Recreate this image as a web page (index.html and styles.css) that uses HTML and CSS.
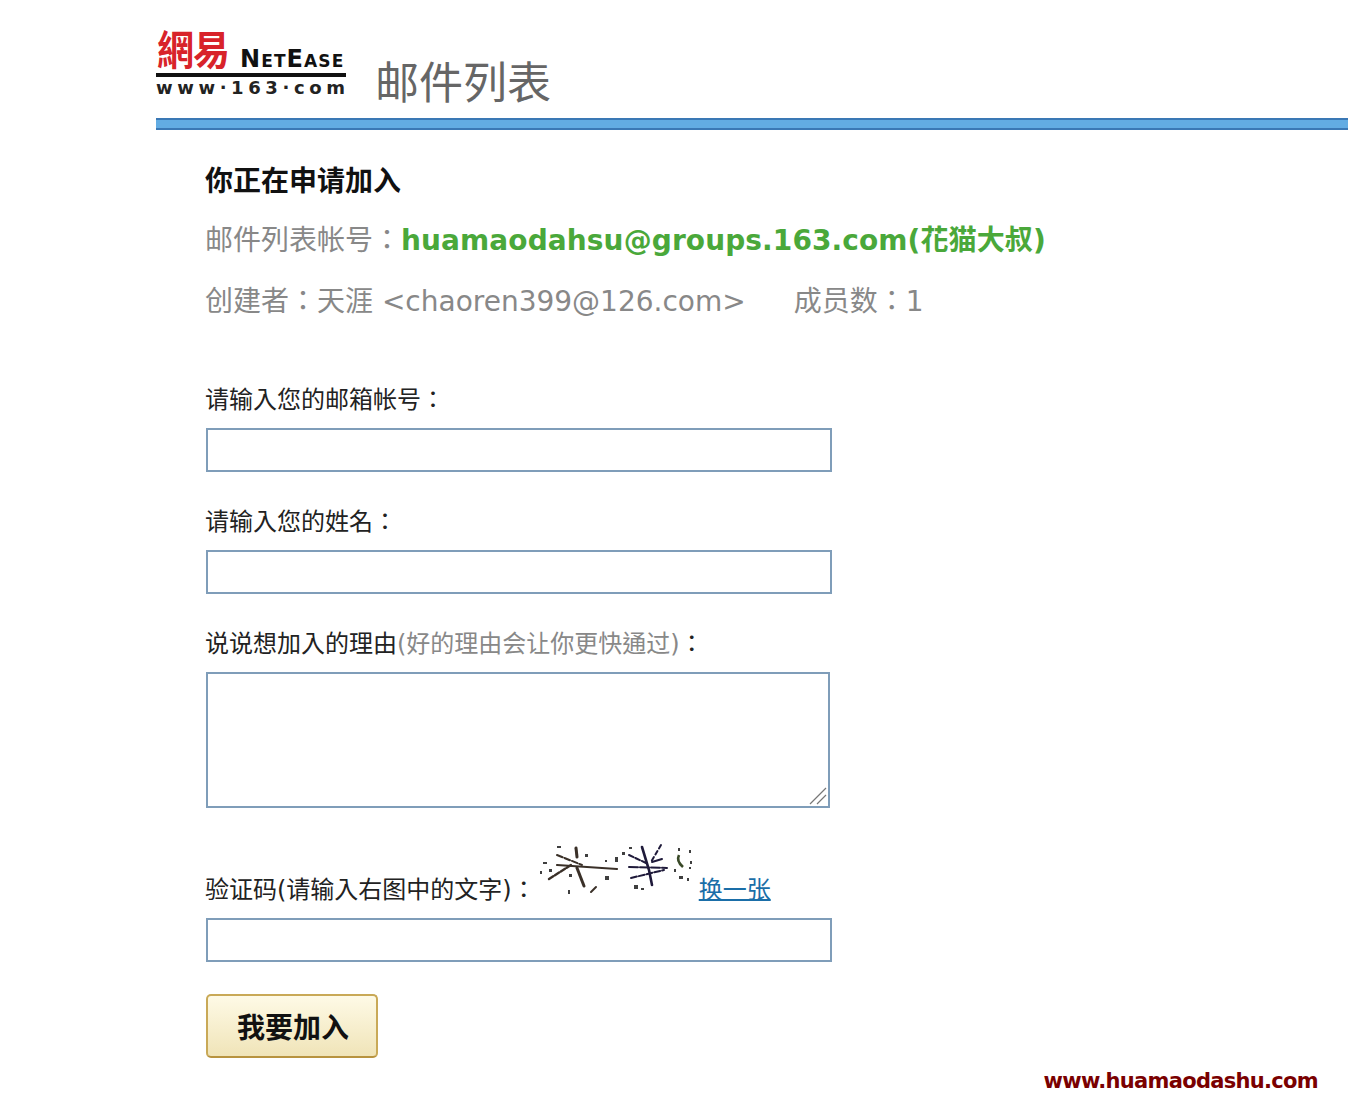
FILE: index.html
```html
<!DOCTYPE html>
<html>
<head>
    <meta name="viewport" content="width=device-width, initial-scale=1">
    <title>邮件列表</title>
    <link rel="stylesheet" href="styles.css">
</head>
<body>
    <div class="page">
        <div class="header">
            <div class="logo">
                <div class="logo-top">
                    <span class="logo-cn">網易</span>
                    <span class="logo-en">NetEase</span>
                </div>
                <div class="logo-url">www·163·com</div>
            </div>
            <div class="header-title">邮件列表</div>
        </div>
        <div class="header-bar"></div>

        <div class="content">
            <h1 class="intro-title">你正在申请加入</h1>
            <p class="info-line first">邮件列表帐号：<b class="group-name">huamaodahsu@groups.163.com(花猫大叔)</b></p>
            <p class="info-line">创建者：天涯 &lt;chaoren399@126.com&gt;<span class="member-count">成员数：1</span></p>

            <form class="join-form">
                <label class="field-label">请输入您的邮箱帐号：</label>
                <input class="text-input" type="text">

                <label class="field-label">请输入您的姓名：</label>
                <input class="text-input" type="text">

                <label class="field-label">说说想加入的理由<span class="hint">(好的理由会让你更快通过)</span>：</label>
                <div class="reason-wrap">
                    <textarea class="reason-input"></textarea>
                    <svg class="resize-grip" width="20" height="20" viewBox="0 0 20 20" aria-hidden="true">
                        <path d="M1 18 L17 2 M8 18 L17 9" fill="none" stroke="#777" stroke-width="1.2"/>
                    </svg>
                </div>

                <label class="field-label captcha-label">
                    <span>验证码(请输入右图中的文字)：</span>
                    <svg class="captcha" width="155" height="58" viewBox="0 0 155 58" aria-hidden="true">
                        <g fill="none" stroke="#3a3028" stroke-width="2" stroke-linecap="round">
                            <path d="M18 25 L78 29" stroke-width="2.2"/>
                            <path d="M18 15 L43 25" stroke-dasharray="6 2"/>
                            <path d="M10 39 L32 25" stroke-dasharray="5 2" stroke-width="2.4"/>
                            <path d="M37 8 L38 17" stroke-width="3"/>
                            <path d="M38 28 L45 46" stroke-width="3"/>
                            <path d="M52 52 L57 47"/>
                        </g>
                        <g fill="none" stroke="#1f1a3a" stroke-width="2" stroke-linecap="round">
                            <path d="M103 7 L110 30 L113 45" stroke-width="2.6"/>
                            <path d="M90 15 L107 23" stroke-dasharray="5 2"/>
                            <path d="M90 27 L128 28" stroke-dasharray="9 2"/>
                            <path d="M92 38 L125 30" stroke-dasharray="6 2"/>
                            <path d="M122 5 L112 22" stroke-dasharray="4 3"/>
                            <path d="M113 22 L123 19"/>
                        </g>
                        <path d="M140 15 Q137 21 144 27" fill="none" stroke="#3a4a28" stroke-width="2.6"/>
                        <g fill="#3f3f3f">
                            <rect x="18" y="6" width="4" height="2"/>
                            <rect x="4" y="22" width="4" height="2"/>
                            <rect x="1" y="31" width="2" height="3"/>
                            <rect x="10" y="29" width="3" height="3"/>
                            <rect x="46" y="14" width="3" height="3"/>
                            <rect x="66" y="20" width="2" height="2"/>
                            <rect x="76" y="17" width="3" height="5"/>
                            <rect x="66" y="36" width="4" height="4"/>
                            <rect x="29" y="50" width="2" height="4"/>
                            <rect x="30" y="34" width="3" height="3"/>
                            <rect x="83" y="12" width="3" height="3"/>
                            <rect x="90" y="7" width="3" height="2"/>
                            <rect x="95" y="45" width="4" height="4"/>
                            <rect x="102" y="48" width="3" height="2"/>
                            <rect x="139" y="8" width="2" height="3"/>
                            <rect x="150" y="10" width="2" height="3"/>
                            <rect x="151" y="21" width="2" height="3"/>
                            <rect x="135" y="29" width="2" height="3"/>
                            <rect x="150" y="27" width="2" height="2"/>
                            <rect x="140" y="36" width="4" height="3"/>
                            <rect x="148" y="38" width="2" height="3"/>
                        </g>
                    </svg>
                    <a class="captcha-link" href="#">换一张</a>
                </label>
                <input class="text-input" type="text">

                <button class="submit-btn" type="button">我要加入</button>
            </form>
        </div>

        <div class="watermark">www.huamaodashu.com</div>
    </div>
</body>
</html>
```

FILE: styles.css
```css
body {
    margin: 0;
    background: #fff;
    color: #333;
    font-family: "DejaVu Sans", "Noto Sans CJK TC", sans-serif;
}

.page {
    position: relative;
    height: 1118px;
    padding-left: 156px;
    box-sizing: border-box;
    overflow: hidden;
}

/* --- header --- */
.header {
    display: flex;
    align-items: flex-end;
    height: 118px;
}

.logo {
    width: 190px;
    margin-bottom: 19px;
}

.logo-top {
    display: flex;
    align-items: flex-end;
    height: 46px;
    border-bottom: 4px solid #111;
}

.logo-cn {
    width: 84px;
    padding-left: 1px;
    box-sizing: border-box;
    font-family: "Noto Sans CJK TC", sans-serif;
    font-size: 37px;
    font-weight: 700;
    line-height: 46px;
    letter-spacing: -1px;
    color: #d8232a;
    white-space: nowrap;
    transform: scaleY(1.12);
    transform-origin: bottom left;
}

.logo-en {
    font-family: "DejaVu Sans", sans-serif;
    font-size: 24px;
    font-weight: 700;
    font-variant: small-caps;
    line-height: 28px;
    letter-spacing: 1.1px;
    color: #111;
    white-space: nowrap;
}

.logo-url {
    font-family: "DejaVu Sans", sans-serif;
    font-size: 18px;
    font-weight: 700;
    line-height: 22px;
    letter-spacing: 4.6px;
    color: #222;
    white-space: nowrap;
}

.header-title {
    margin-left: 29px;
    margin-bottom: 2px;
    font-family: "Noto Sans CJK SC", sans-serif;
    font-size: 44px;
    line-height: 72px;
    color: #666;
}

.header-bar {
    height: 8px;
    background: #62ace3;
    border-top: 2px solid #3a78b5;
    border-bottom: 2px solid #3a78b5;
}

/* --- content --- */
.content {
    padding: 31px 0 0 49px;
}

.intro-title {
    margin: 0;
    font-family: "Noto Sans CJK SC", sans-serif;
    font-size: 28px;
    font-weight: 700;
    line-height: 36px;
    color: #111;
}

.info-line {
    margin: 25px 0 0 0;
    font-size: 28px;
    line-height: 36px;
    color: #888;
    white-space: nowrap;
}

.info-line.first {
    margin-top: 26px;
}

.group-name {
    letter-spacing: 0.1px;
    color: #4aa83a;
}

.member-count {
    margin-left: 48px;
}

/* --- form --- */
.join-form {
    display: flex;
    flex-direction: column;
    align-items: flex-start;
    margin-top: 66px;
}

.field-label {
    font-size: 24px;
    line-height: 28px;
    color: #222;
    margin-bottom: 14px;
    white-space: nowrap;
}

.hint {
    color: #888;
}

.text-input {
    display: block;
    width: 626px;
    height: 44px;
    box-sizing: border-box;
    border: 2px solid #7f9db9;
    background: #fff;
    margin: 0 0 36px 1px;
    padding: 0;
}

.reason-wrap {
    position: relative;
    width: 624px;
    height: 136px;
    margin: 0 0 36px 1px;
}

.reason-input {
    display: block;
    width: 100%;
    height: 100%;
    box-sizing: border-box;
    border: 2px solid #7f9db9;
    background: #fff;
    margin: 0;
    padding: 0;
    resize: none;
}

.resize-grip {
    position: absolute;
    right: 1px;
    bottom: 2px;
}

.captcha-label {
    display: flex;
    align-items: flex-end;
    height: 60px;
}

.captcha {
    display: block;
    margin: 0 5px 6px 3px;
}

.captcha-link {
    color: #1a6ea8;
    text-decoration: underline;
    text-decoration-thickness: 2px;
}

.submit-btn {
    display: block;
    width: 172px;
    height: 64px;
    margin: -4px 0 0 1px;
    box-sizing: border-box;
    border: 2px solid #c9a957;
    border-bottom-color: #b8933f;
    border-radius: 5px;
    background: linear-gradient(180deg, #fefae6 0%, #f0e4b8 100%);
    font-family: "Noto Sans CJK SC", sans-serif;
    font-size: 28px;
    font-weight: 700;
    color: #111;
    padding: 0 0 0 2px;
}

/* --- site mark in the corner --- */
.watermark {
    position: absolute;
    right: 30px;
    bottom: 23px;
    font-family: "DejaVu Sans", sans-serif;
    font-size: 21px;
    font-weight: 700;
    line-height: 28px;
    letter-spacing: -0.7px;
    color: #7a0000;
    white-space: nowrap;
}
```
